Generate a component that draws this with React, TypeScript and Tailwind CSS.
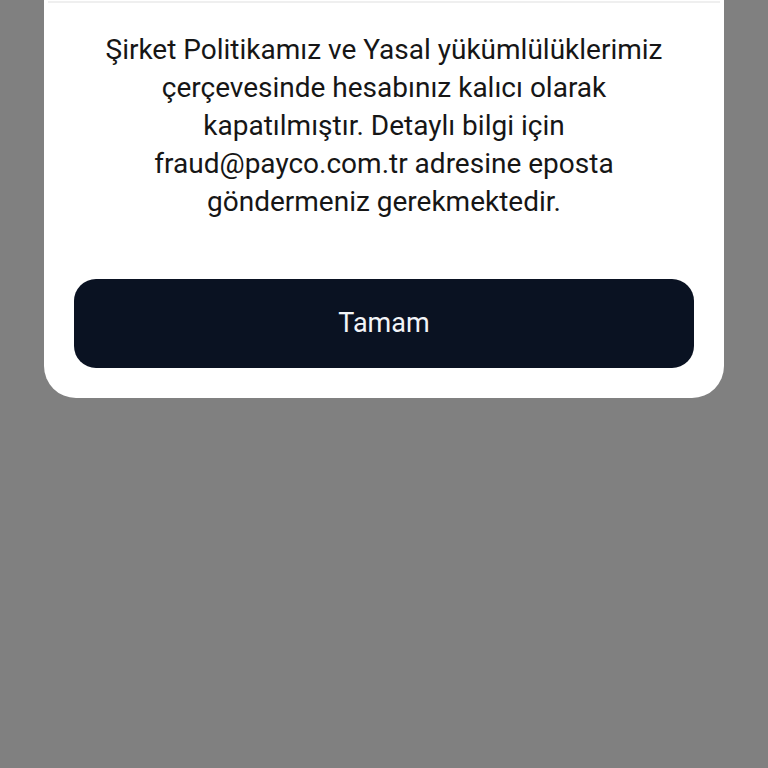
export default function App() {
  return (
    <div
      className="flex h-[768px] w-[768px] flex-col items-center bg-[#808080]"
      style={{ fontFamily: "Roboto, 'Liberation Sans', sans-serif" }}
    >
      <div className="flex w-[680px] flex-col rounded-b-[32px] bg-white pb-[30px]">
        <div className="mx-[4px] mt-[1px] h-[2px] bg-[#efefef]" />
        <p className="mt-[28px] px-[20px] text-center text-[28px] leading-[38px] text-[#161616]">
          Şirket Politikamız ve Yasal yükümlülüklerimiz
          <br />
          çerçevesinde hesabınız kalıcı olarak
          <br />
          kapatılmıştır. Detaylı bilgi için
          <br />
          fraud@payco.com.tr adresine eposta
          <br />
          göndermeniz gerekmektedir.
        </p>
        <button
          type="button"
          className="mx-[30px] mt-[58px] flex h-[89px] items-center justify-center rounded-[22px] bg-[#0a1222] text-[27px] text-[#f2f4f8]"
        >
          Tamam
        </button>
      </div>
    </div>
  );
}
